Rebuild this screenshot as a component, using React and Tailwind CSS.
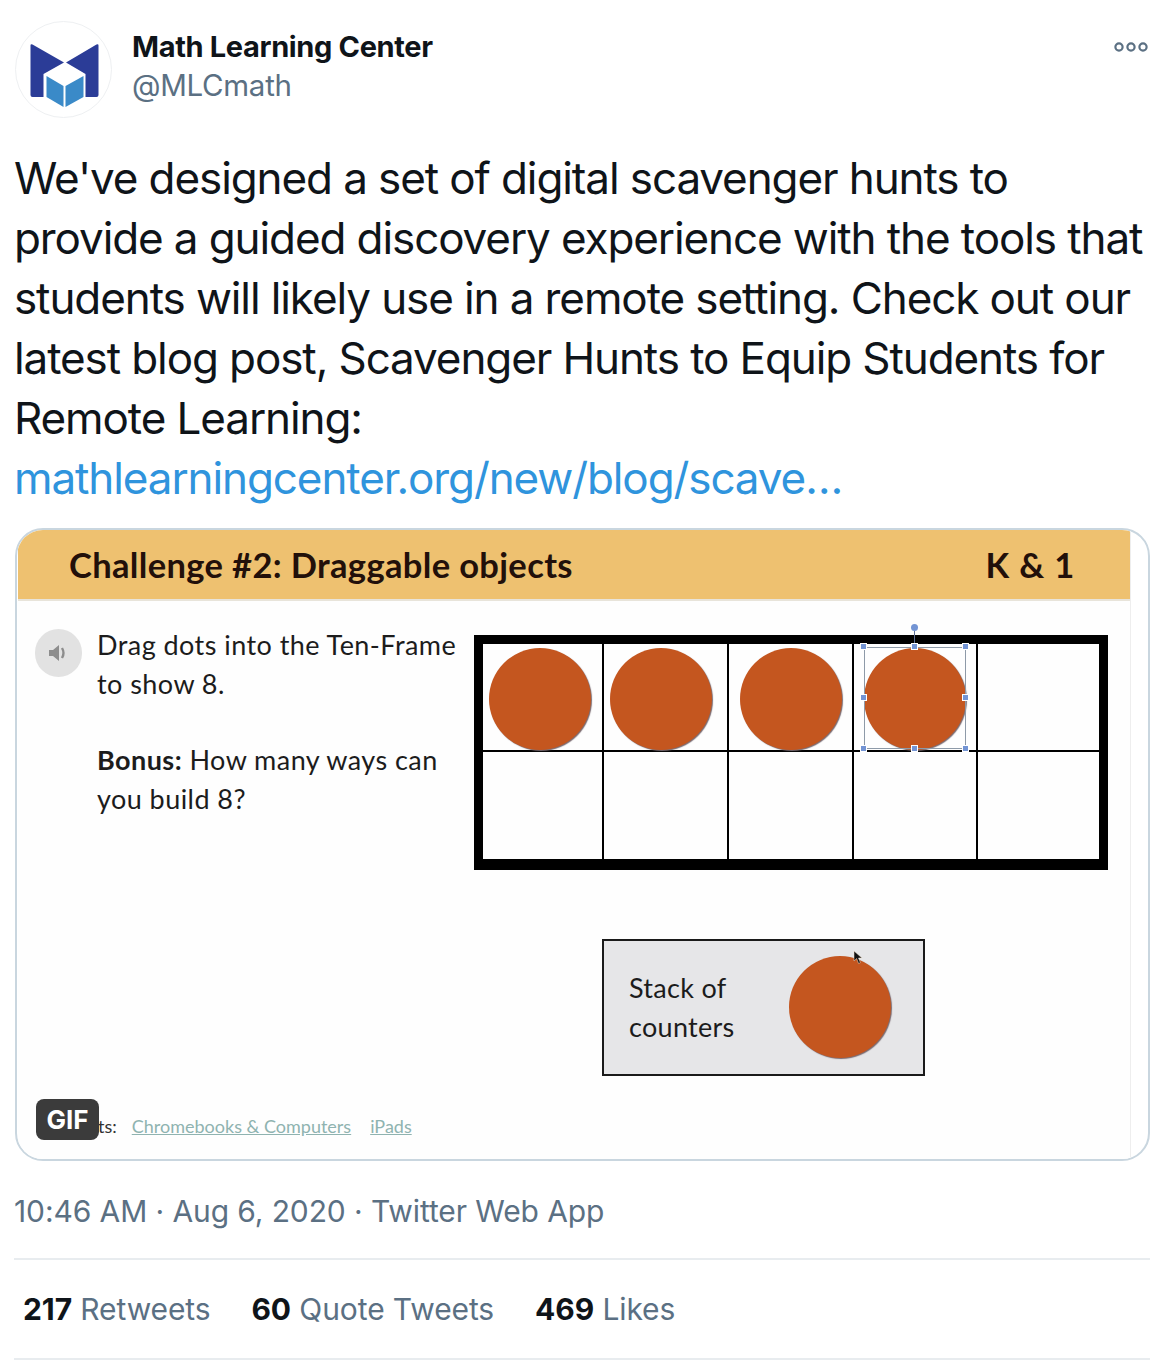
const Counter = ({ className = "" }) => (
  <div className={`absolute w-[102px] h-[102px] rounded-full bg-[#c4561f] shadow-[1px_1px_1px_#7a6a70] ${className}`} />
);

const Handle = ({ className = "" }) => (
  <div className={`absolute w-[7px] h-[7px] bg-[#7394d4] border-[0.5px] border-white ${className}`} />
);

const Cell = () => <div className="border-r-2 border-b-2 border-black" />;

function Logo() {
  return (
    <svg width="94" height="94" viewBox="0 0 94 94" fill="none">
      <g transform="translate(-15.5 -22)">
        <path d="M29 44.5Q29 42.5 31 43.5L62.5 61.5L42 73V96H31Q29 96 29 94Z" fill="#2b3c97" />
        <path d="M97 44.5Q97 42.5 95 43.5L64.5 61.5L84 73V96H95Q97 96 97 94Z" fill="#2b3c97" />
        <path d="M45 75L62 85V106L45 96Z" fill="#3a8ac8" />
        <path d="M82 75L64 85V106L82 96Z" fill="#3a8ac8" />
      </g>
    </svg>
  );
}

function More() {
  return (
    <svg width="34" height="12" viewBox="0 0 34 12" fill="none" stroke="#5b7083" strokeWidth="2.2">
      <circle cx="5" cy="6" r="3.6" />
      <circle cx="17" cy="6" r="3.6" />
      <circle cx="29" cy="6" r="3.6" />
    </svg>
  );
}

function Cursor() {
  return (
    <svg className="absolute left-[249px] top-[9px]" width="11" height="16" viewBox="0 0 11 16">
      <path d="M1 1L1 11L3.6 8.6L5.6 13.5L7.4 12.7L5.5 8H9Z" fill="#111" stroke="#f3e2d0" strokeWidth="0.5" />
    </svg>
  );
}

function Media() {
  const video = { fontFamily: '"Lato", "Open Sans", sans-serif' };
  return (
    <div className="relative mt-[20px] ml-[1px] w-[1135px] h-[633px] rounded-[28px] border-2 border-[#c9d6df] overflow-hidden bg-white" style={video}>
      <div className="w-[1113px] h-full ml-[1px] border-r border-[#eeeeee] flex flex-col bg-[#fefefe]">
        <div className="h-[71px] shrink-0 bg-[#eec170] border-b-2 border-[#e8e4da] flex items-center justify-between pl-[51px] pr-[55px]">
          <span className="text-[34.5px] font-bold text-[#22100a] tracking-[0.35px]">Challenge #2: Draggable objects</span>
          <span className="text-[34.5px] font-bold text-[#22100a] tracking-[0.8px]">K &amp; 1</span>
        </div>

        <div className="flex flex-1 min-h-0">
          <div className="w-[456px] shrink-0 relative pl-[79px] pt-[25px] text-[27px] leading-[38.5px] text-[#1c1c1c] tracking-[0.45px]">
            <div className="absolute left-[17px] top-[28px] w-[47px] h-[48px] rounded-full bg-[#e2e2e2] flex items-center justify-center">
              <svg width="22" height="22" viewBox="0 0 22 22" fill="none">
                <path d="M1 8H5L11 3V19L5 14H1Z" fill="#8d8d8d" />
                <path d="M14 6Q17 11 14 16" stroke="#8d8d8d" strokeWidth="2.4" />
              </svg>
            </div>
            <p>Drag dots into the Ten-Frame</p>
            <p>to show 8.</p>
            <p className="mt-[38px]"><b>Bonus:</b> How many ways can</p>
            <p>you build 8?</p>
          </div>

          <div className="flex-1 pt-[34px]">
            <div className="relative w-[634px] h-[235px] border-[9px] border-black">
              <div className="grid grid-cols-[121px_125px_125px_124px_1fr] grid-rows-[108px_1fr] h-full -mr-[2px] -mb-[2px]">
                <Cell /><Cell /><Cell /><Cell /><Cell />
                <Cell /><Cell /><Cell /><Cell /><Cell />
              </div>
              <Counter className="left-[6px] top-[4px]" />
              <Counter className="left-[127px] top-[4px]" />
              <Counter className="left-[257px] top-[4px]" />
              <Counter className="left-[381px] top-[4px]" />
              <div className="absolute left-[381px] top-[3px] w-[102px] h-[102px] border border-[#8e9aa8]" />
              <div className="absolute left-[431px] -top-[13px] w-px h-[16px] bg-[#5b6d92]" />
              <div className="absolute left-[428px] -top-[20px] w-[7px] h-[7px] rounded-full bg-[#7394d4]" />
              <Handle className="left-[377px] -top-[1px]" />
              <Handle className="left-[428px] -top-[1px]" />
              <Handle className="left-[479px] -top-[1px]" />
              <Handle className="left-[377px] top-[50px]" />
              <Handle className="left-[479px] top-[50px]" />
              <Handle className="left-[377px] top-[101px]" />
              <Handle className="left-[428px] top-[101px]" />
              <Handle className="left-[479px] top-[101px]" />
            </div>

            <div className="relative ml-[128px] mt-[69px] w-[323px] h-[137px] border-2 border-[#1a1a1a] bg-[#e6e6e8] flex items-center">
              <div className="pl-[25px] text-[27px] leading-[38.5px] text-[#1c1c1c] tracking-[0.3px]">
                <p>Stack of</p>
                <p>counters</p>
              </div>
              <Counter className="left-[185px] top-[15px]" />
              <Cursor />
            </div>
          </div>
        </div>

        <div className="h-[46px] shrink-0 flex items-start pl-[80px] text-[18px] text-[#333] gap-[14px]">
          <span>ts:</span>
          <span className="text-[#8fb3b0] underline ml-[1px]">Chromebooks &amp; Computers</span>
          <span className="text-[#8fb3b0] underline ml-[5px]">iPads</span>
        </div>
      </div>

      <div className="absolute left-[19px] bottom-[19px] w-[63px] h-[41px] rounded-[8px] bg-[#3b3b3b] text-white text-[26px] font-bold flex items-center justify-center" style={{ fontFamily: '"Inter", sans-serif' }}>
        GIF
      </div>
    </div>
  );
}

export default function App() {
  return (
    <div className="w-[1158px] h-[1362px] bg-white overflow-hidden pl-[14px] pr-[8px] text-[#0f1419]" style={{ fontFamily: '"Inter", "Liberation Sans", sans-serif' }}>
      <div className="flex items-start pt-[21px] h-[127px]">
        <div className="w-[97px] h-[97px] ml-[1px] rounded-full border border-[#eef0f2] flex items-center justify-center shrink-0">
          <Logo />
        </div>
        <div className="ml-[20px] pt-[7px] flex-1">
          <div className="text-[29px] leading-[38px] font-bold tracking-[-0.35px]">Math Learning Center</div>
          <div className="text-[29.5px] leading-[38px] text-[#5b7083] tracking-[-0.3px]">@MLCmath</div>
        </div>
        <div className="mt-[20px] mr-[2px]"><More /></div>
      </div>

      <div className="text-[44px] leading-[60px] tracking-[-1.1px] pt-[21px] whitespace-nowrap">
        <p>We've designed a set of digital scavenger hunts to</p>
        <p>provide a guided discovery experience with the tools that</p>
        <p>students will likely use in a remote setting. Check out our</p>
        <p>latest blog post, Scavenger Hunts to Equip Students for</p>
        <p>Remote Learning:</p>
        <p className="text-[#2f94dd]">mathlearningcenter.org/new/blog/scave…</p>
      </div>

      <Media />

      <div className="mt-[30px] text-[30px] leading-[40px] text-[#5b7083] tracking-[-0.1px] h-[69px] border-b-2 border-[#e8ecef] mr-[0px]">
        10:46 AM · Aug 6, 2020 · Twitter Web App
      </div>

      <div className="h-[100px] border-b-2 border-[#e8ecef] flex items-center pl-[9px] gap-[41px] text-[30px] text-[#5b7083] tracking-[-0.1px]">
        <span><b className="text-[#0f1419]">217</b> Retweets</span>
        <span><b className="text-[#0f1419]">60</b> Quote Tweets</span>
        <span><b className="text-[#0f1419]">469</b> Likes</span>
      </div>
    </div>
  );
}
